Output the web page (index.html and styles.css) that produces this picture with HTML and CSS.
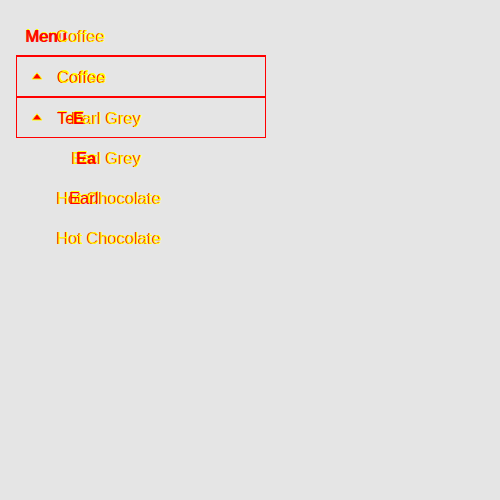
FILE: index.html
```html
<!DOCTYPE html>
<html>
<head>
<meta charset="utf-8">
<link rel="stylesheet" href="styles.css">
</head>
<body>
<div class="page">
  <div class="header">
    <span class="lbl red">Menu<span class="ghost red g-m">Menu</span></span><span class="ghost yellow g-head">Coffee</span>
  </div>
  <div class="box">
    <div class="row">
      <svg class="caret" width="12" height="8" viewBox="0 0 12 8"><polygon points="6,0.8 11,7 1,7" fill="#ff0000" stroke="#ffff00" stroke-width="1"/></svg>
      <span class="lbl"><span class="red">Coffee</span><span class="ghost yellow g-c1">Coffee</span></span>
    </div>
    <div class="row">
      <svg class="caret" width="12" height="8" viewBox="0 0 12 8"><polygon points="6,0.8 11,7 1,7" fill="#ff0000" stroke="#ffff00" stroke-width="1"/></svg>
      <span class="lbl"><span class="red">Tea</span><span class="ghost yellow g-eg">Earl Grey</span><span class="ghost red bold g-e">E</span></span>
    </div>
  </div>
  <ul class="list">
    <li class="sub"><span class="lbl"><span class="yellow">Earl Grey</span><span class="ghost red bold g-ea">Ea</span></span></li>
    <li><span class="lbl"><span class="yellow">Hot Chocolate</span><span class="ghost red g-hc">Earl</span></span></li>
    <li><span class="lbl"><span class="yellow">Hot Chocolate</span></span></li>
  </ul>
</div>
</body>
</html>
```
FILE: styles.css
```css
html, body {
  margin: 0;
  padding: 0;
  background: #e5e5e5;
}
.page {
  padding: 26px 0 0 16px;
  width: 250px;
  font-family: "Liberation Sans", Arial, sans-serif;
  font-size: 16.5px;
}
.header {
  position: relative;
  height: 20px;
  line-height: 20px;
  padding-left: 9px;
  margin-bottom: 9px;
}
.lbl {
  position: relative;
  display: inline-block;
}
.bold { font-weight: bold; }
.red {
  color: #ff0000;
  text-shadow: 1px -1px 0 #ffff00;
}
.yellow {
  color: #ffff00;
  text-shadow: -1px 0 0 #ff0000;
}
.ghost {
  position: absolute;
  top: 0;
  white-space: nowrap;
}
.g-m { left: 1px; text-shadow: none; }
.g-head { left: 41px; top: 0; }
.g-c1 { left: 1px; }
.g-eg { left: 15px; }
.g-e { left: 16px; }
.g-ea { left: 4px; }
.g-hc { left: 12px; }
.box {
  border-left: 1px solid #ff0000;
  border-right: 1px solid #ff0000;
  border-bottom: 1px solid #ff0000;
}
.row {
  height: 39px;
  border-top: 2px solid #ff0000;
  display: flex;
  align-items: center;
  padding-left: 14px;
  line-height: 20px;
}
.caret {
  display: block;
  margin-right: 14px;
  margin-top: -2px;
}
.list {
  list-style: none;
  margin: 0;
  padding: 0 0 0 41px;
}
.list li {
  height: 40px;
  line-height: 40px;
}
.list li.sub {
  padding-left: 15px;
}
```
